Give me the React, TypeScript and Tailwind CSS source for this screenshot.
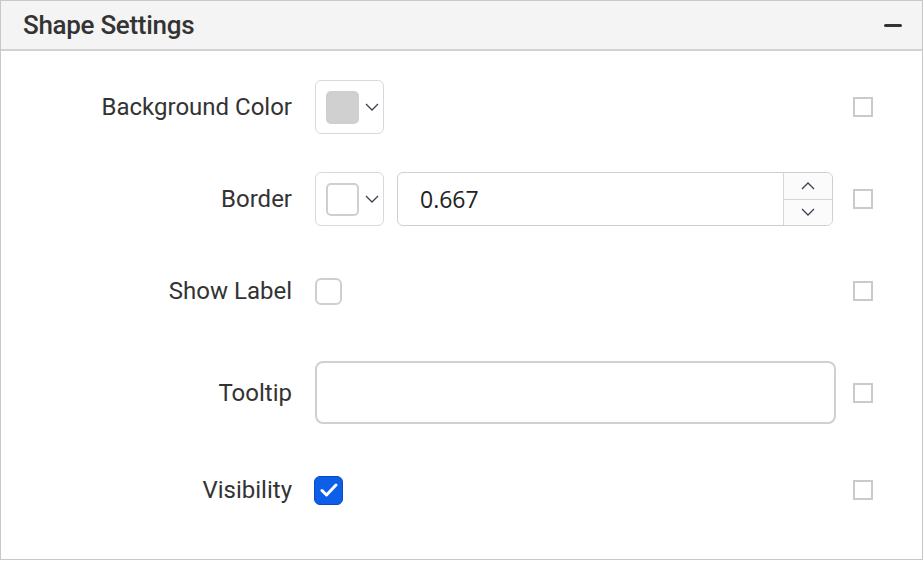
import React from 'react'

const Chevron = ({ up = false }: { up?: boolean }) => (
    <svg width="14" height="8" viewBox="0 0 14 8" fill="none" className={up ? 'rotate-180' : ''}>
        <path d="M1 1l6 6 6-6" stroke="#3a4150" strokeWidth="1.3" />
    </svg>
)

const SideBox = () => <div className="w-[20px] h-[20px] border-2 border-[#cacaca] bg-white shrink-0" />

function Row({ label, h, mt, children }: { label: string; h: number; mt: string; children?: React.ReactNode }) {
    return (
        <div className={`flex items-center ${mt}`} style={{ height: h }}>
            <div className="w-[291px] text-right text-[24px] text-[#333]">{label}</div>
            <div className="ml-[23px] w-[521px] flex items-center">{children}</div>
            <div className="ml-[17px]">
                <SideBox />
            </div>
        </div>
    )
}

const ColorPick = ({ swatch }: { swatch: string }) => (
    <div className="w-[69px] h-[54px] border border-[#d9d9d9] rounded-md flex items-center pl-[10px] gap-[6px] bg-white">
        <div className={`w-[33px] h-[33px] rounded-[5px] border-2 border-[#cfcfcf] ${swatch}`} />
        <Chevron />
    </div>
)

export default function App() {
    return (
        <div className="w-[923px] h-[560px] border border-[#c8c8c8] bg-white" style={{ fontFamily: 'Roboto, "Liberation Sans", sans-serif' }}>
            <div className="h-[50px] bg-[#f4f4f4] border-b-2 border-[#d2d2d2] flex items-center justify-between pl-[22px] pr-[20px]">
                <h2 className="text-[26px] font-medium text-[#333] tracking-[-0.3px]">Shape Settings</h2>
                <div className="w-[18px] h-[3px] bg-[#333] rounded-sm" />
            </div>

            <Row label="Background Color" h={54} mt="mt-[29px]">
                <ColorPick swatch="bg-[#d0d0d0]" />
            </Row>

            <Row label="Border" h={54} mt="mt-[38px]">
                <ColorPick swatch="bg-white" />
                <div className="ml-[13px] w-[436px] h-[54px] border border-[#cfcfcf] rounded-md flex overflow-hidden">
                    <div className="flex-1 flex items-center pl-[22px] text-[23px] text-[#222]" style={{ fontFamily: '"Open Sans", sans-serif' }}>
                        0.667
                    </div>
                    <div className="w-[49px] border-l border-[#d6d6d6] bg-[#fbfbfb] flex flex-col">
                        <div className="flex-1 flex items-center justify-center border-b border-[#d6d6d6]">
                            <Chevron up />
                        </div>
                        <div className="flex-1 flex items-center justify-center">
                            <Chevron />
                        </div>
                    </div>
                </div>
            </Row>

            <Row label="Show Label" h={54} mt="mt-[38px]">
                <div className="w-[27px] h-[27px] border-2 border-[#cfcfcf] rounded-md" />
            </Row>

            <Row label="Tooltip" h={63} mt="mt-[43px]">
                <div className="w-[521px] h-[63px] border-2 border-[#d0d0d0] rounded-lg" />
            </Row>

            <Row label="Visibility" h={54} mt="mt-[39px]">
                <div className="-ml-[1px] w-[29px] h-[29px] rounded-md bg-[#0d5fe9] border border-[#0a4cc0] flex items-center justify-center">
                    <svg width="18" height="14" viewBox="0 0 18 14" fill="none">
                        <path d="M2 7.5l4.5 4.5L16 2" stroke="white" strokeWidth="3" strokeLinecap="round" strokeLinejoin="round" />
                    </svg>
                </div>
            </Row>
        </div>
    )
}
